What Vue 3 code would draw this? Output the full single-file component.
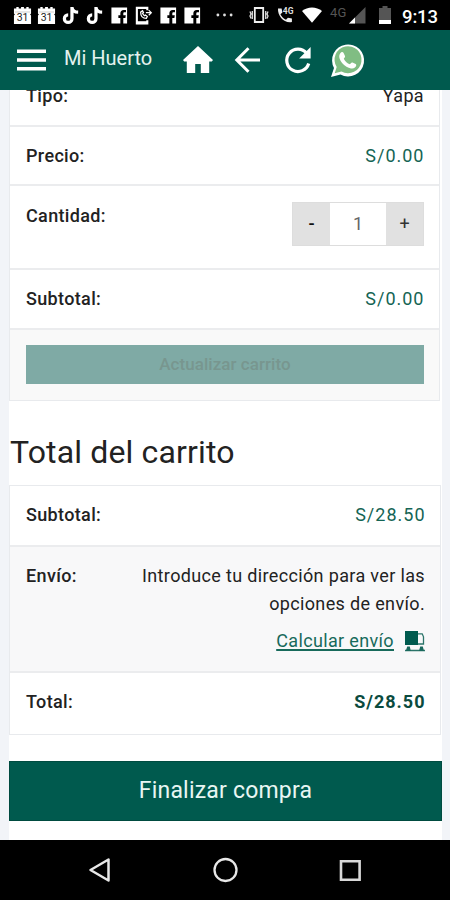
<script setup>
import { ref } from 'vue'

const quantity = ref(1)
const change = (step) => {
  quantity.value = Math.max(0, quantity.value + step)
}
</script>

<template>
  <div class="screen">
    <header class="status">
      <div class="notifications">
        <svg v-for="n in 2" :key="'cal' + n" viewBox="0 0 20 20">
          <path d="M1 2.500h2.500V1H6v1.500h2.500V1h3v1.500H14V1h2.500v1.500H19V8l-1 1 1 1v9H1v-9l1-1-1-1z" fill="#fff" />
          <path d="M2 6.300h16" stroke="#aaa" stroke-width=".6" />
          <text x="10" y="15.500" text-anchor="middle" class="day">31</text>
        </svg>
        <svg v-for="n in 2" :key="'note' + n" viewBox="0 0 20 20">
          <path d="M10.500 1v12.300a4 4 0 1 1-4-4M10.500 1.500c.5 3.200 2.800 4.900 6.500 5" fill="none" stroke="#fff" stroke-width="3.400" />
        </svg>
        <svg viewBox="0 0 20 20"><path d="M1.500 1.500h16.500v17H14v-6h2.200l.4-2.700H14V8.200c0-1 .4-1.500 1.600-1.500h1.200V4.300h-2.300c-2.400 0-3.600 1.400-3.600 3.500v2H8.800v2.700h2.100v6H1.500z" fill="#fff" /></svg>
        <svg viewBox="0 0 20 20">
          <path d="M14 4.500V2H3v16.500h11V15" fill="none" stroke="#fff" stroke-width="2.200" />
          <path d="M3 16h11v3H3z" fill="#fff" />
          <path d="M7 6.500c0 4 2.500 6.500 6 6.500l1-2-2-1.500-1 .7C9.800 9.500 9.300 8.500 9 7.700L10 7 9 5zM12.500 7h5.500M15.500 4.300 18.200 7l-2.700 2.700" fill="none" stroke="#fff" stroke-width="1.300" />
        </svg>
        <svg v-for="n in 2" :key="'fb' + n" viewBox="0 0 20 20"><path d="M1.500 1.500h16.500v17H14v-6h2.200l.4-2.700H14V8.200c0-1 .4-1.500 1.600-1.500h1.200V4.300h-2.300c-2.400 0-3.600 1.400-3.600 3.500v2H8.800v2.700h2.100v6H1.500z" fill="#fff" /></svg>
      </div>
      <svg class="dots" viewBox="0 0 18 4"><circle cx="2" cy="2" r="1.500" /><circle cx="9" cy="2" r="1.500" /><circle cx="16" cy="2" r="1.500" /></svg>
      <svg class="vibrate" viewBox="0 0 20 18">
        <path d="M5.800 2h8.400v14H5.800z" fill="none" stroke="#eee" stroke-width="1.800" />
        <path d="M3.300 5v8M16.700 5v8M1 5.500 2 8 1 10l1 2.500M19 5.500 18 8l1 2-1 2.500" fill="none" stroke="#ddd" stroke-width="1.300" />
      </svg>
      <svg class="call" viewBox="0 0 18 18">
        <path d="M1 2.500h3.600l.8 4-2 1.800c1.300 2.500 3 4.200 5.600 5.400l1.900-2 4 .9V16C7 17.500.5 10 1 2.500z" fill="#eee" />
        <text x="5.800" y="7.800" class="tiny">4G</text>
      </svg>
      <svg class="wifi" viewBox="0 0 20 16"><path d="M0 4C5.500-.7 14.500-.7 20 4L10 15.700z" fill="#fff" /></svg>
      <span class="network">4G</span>
      <svg class="signal" viewBox="0 0 17 17"><path d="M16.500 0v16.500H0z" fill="#555" /><path d="M6 10.500v6H0z" fill="#fff" /></svg>
      <svg class="battery" viewBox="0 0 12 18"><path d="M0 2h3.500V0h5v2H12v12H0z" fill="#555" /><path d="M0 14h12v4H0z" fill="#fff" /></svg>
      <span class="clock">9:13</span>
    </header>

    <nav class="appbar">
      <svg class="menu" viewBox="0 0 30 22"><path d="M0 2h30M0 11h30M0 20h30" stroke="#fff" stroke-width="3.500" /></svg>
      <span class="brand">Mi Huerto</span>
      <svg class="home" viewBox="0 0 30 28"><path d="M15 0 30 14l-1.200 1.500h-2.600V27h-8.400v-9h-5.600v9H3.800V15.500H1.200L0 14z" fill="#fff" /></svg>
      <svg class="back" viewBox="0 0 26 26"><path d="M25 13H2M13.500 1.300 1.800 13l11.700 11.700" fill="none" stroke="#fff" stroke-width="3" /></svg>
      <svg class="reload" viewBox="0 0 28 28"><path d="M22.700 7.300A11.200 11.200 0 1 0 24.700 17.500" fill="none" stroke="#fff" stroke-width="3.200" /><path d="M26.600 1v11.500H15.100z" fill="#fff" /></svg>
      <svg class="whatsapp" viewBox="0 0 36 36">
        <path d="M1 35 4 26A16 16 0 1 1 10.500 32.500z" fill="#fff" />
        <path d="M4.700 31.300 6.700 25A13.500 13.500 0 1 1 11.500 29.500z" fill="#80bd83" />
        <path d="M10.300 11.200c1-1.600 2.700-1.500 3.300-.3l1.400 3.200c.4 1-.7 1.900-1.200 2.600 1.500 2.900 3.400 4.500 6.100 5.500 1-1 1.600-2.200 2.600-1.700l3.200 1.600c1.200.8.300 2.600-.8 3.500-2 1.600-4.900 1-8.400-.9-3.400-2-6-5.300-7-8.500-.6-2-.1-3.700.8-5z" fill="#fff" />
      </svg>
    </nav>

    <main class="viewport">
      <div class="page">
        <section class="card item">
          <div class="row"><b>Tipo:</b><span>Yapa</span></div>
          <div class="row price"><b>Precio:</b><span class="money">S/0.00</span></div>
          <div class="row amount">
            <b>Cantidad:</b>
            <div class="stepper">
              <button class="minus" @click="change(-1)">-</button>
              <span class="count">{{ quantity }}</span>
              <button @click="change(1)">+</button>
            </div>
          </div>
          <div class="row"><b>Subtotal:</b><span class="money">S/0.00</span></div>
          <div class="update"><button disabled>Actualizar carrito</button></div>
        </section>

        <h2>Total del carrito</h2>

        <section class="card totals">
          <div class="row"><b>Subtotal:</b><span class="money">S/28.50</span></div>
          <div class="row shipping">
            <b>Envío:</b>
            <div class="details">
              <p>Introduce tu dirección para ver las opciones de envío.</p>
              <a><span>Calcular envío</span>
                <svg viewBox="0 0 20 21"><path d="M0 0h13v14H0z" fill="#005a4e" /><path d="M13 2.800h4.200l1.300 3V13H13" fill="none" stroke="#2b7469" stroke-width="1.300" /><path d="M0 19.500h20M3.500 16.500v3M16.500 16.500v3" fill="none" stroke="#2b7469" stroke-width="1.500" /><path d="M2.200 15.500h2.600l1 4.500h-5zM15.200 15.500h2.600l1.200 4.500h-5z" fill="#1a695d" /></svg>
              </a>
            </div>
          </div>
          <div class="row"><b>Total:</b><b class="money">S/28.50</b></div>
        </section>

        <button class="checkout">Finalizar compra</button>
      </div>
    </main>

    <footer class="navbar">
      <svg viewBox="0 0 24 26"><path d="M20.500 2.500v21L2.500 13z" fill="none" stroke="#e8e8e8" stroke-width="2.500" stroke-linejoin="round" /></svg>
      <svg viewBox="0 0 24 26"><circle cx="12.500" cy="13" r="11" fill="none" stroke="#e8e8e8" stroke-width="2.300" /></svg>
      <svg viewBox="0 0 24 26"><path d="M3 4.200h18.600v18.600H3z" fill="none" stroke="#d8d8d8" stroke-width="2.600" /></svg>
    </footer>
  </div>
</template>

<style>
body { margin: 0; }
</style>

<style scoped>
* { box-sizing: border-box; }
.screen { width: 450px; height: 900px; display: flex; flex-direction: column; overflow: hidden; background: #f2f4f8; font-family: Roboto, "Liberation Sans", sans-serif; font-size: 18px; line-height: 28px; color: #222; }
svg { display: block; flex: none; overflow: visible; }
button { font: inherit; border: 0; padding: 0; border-radius: 0; }

.status { height: 30px; flex: none; background: #000; color: #fff; display: flex; align-items: center; padding-left: 13px; }
.notifications { display: flex; gap: 5.300px; }
.notifications svg { width: 19px; height: 19px; }
.day { font-size: 11px; font-weight: 400; fill: #222; }
.tiny { font-size: 8.500px; font-weight: 700; fill: #ddd; }
.dots { width: 17px; height: 4px; fill: #ddd; margin-left: 14px; }
.vibrate { width: 20px; height: 18px; margin-left: 16px; }
.call { width: 18px; height: 18px; margin-left: 8px; }
.wifi { width: 20px; height: 16px; margin-left: 7px; }
.network { font-size: 13px; width: 18px; margin: -4px 0 0 8px; color: #555; }
.signal { width: 17px; height: 17px; margin-left: 1px; }
.battery { width: 12px; height: 18px; margin-left: 13px; }
.clock { margin: 3px 0 0 11px; font-size: 18.500px; font-weight: 500; letter-spacing: -.2px; }

.appbar { height: 60px; flex: none; background: #005a4e; display: flex; align-items: center; padding-left: 17px; }
.menu { width: 29px; height: 22px; }
.brand { margin: -4px 0 0 18px; width: 89px; font-size: 20px; color: #e4f2ef; white-space: nowrap; }
.home { width: 30px; height: 28px; margin-left: 30px; }
.back { width: 26px; height: 26px; margin-left: 22px; }
.reload { width: 28px; height: 28px; margin-left: 23px; }
.whatsapp { width: 36px; height: 36px; margin-left: 18px; }

.viewport { flex: 1; min-height: 0; overflow: hidden; padding: 0 8px 0 9px; }
.page { height: 774px; margin-top: -24px; background: #fff; display: flex; flex-direction: column; }
.card { border: 1.500px solid #e8eaed; letter-spacing: .35px; }
.item { height: 335px; margin-right: 2px; flex: none; }
.totals { height: 250px; margin-right: 1px; flex: none; }
.row { height: 60px; display: flex; justify-content: space-between; padding: 15px 15px 0 16px; border-bottom: 2px solid #ebecee; }
.row b { font-weight: 500; }
.money { color: #146454; letter-spacing: 1px; margin-right: -.5px; }
.price { height: 59px; }
.amount { height: 84px; padding-top: 16px; }
.stepper { display: flex; width: 132px; height: 44px; border: 1px solid #ddd; letter-spacing: 0; }
.stepper button { width: 37px; background: #e1e1e1; color: #333; }
.stepper .minus { color: #111; font-weight: 500; }
.count { flex: 1; text-align: center; line-height: 42px; color: #666; }
.update { height: 70px; padding: 15px 15px 15px 16px; background: #f9f9f9; }
.update button { display: block; width: 100%; height: 39px; background: #7faaa5; color: #78968f; font-weight: 500; font-size: 17px; line-height: 39px; letter-spacing: .05px; }
h2 { flex: none; margin: 31px 0 13px 1px; font-size: 32px; line-height: 40px; font-weight: 400; color: #222; height: 40px; letter-spacing: .15px; }
.totals .row { height: 61px; }
.totals .shipping { height: 126px; background: #f8f8f9; }
.totals .row:last-child { border: 0; }
.details { width: 310px; text-align: right; }
.details p { margin: 0; padding-left: 20px; }
.details a { display: flex; justify-content: flex-end; align-items: center; gap: 11px; margin-top: 9px; color: #176a5b; }
.details a span { text-decoration: underline; text-decoration-thickness: 2px; text-underline-offset: 2px; }
.details a svg { width: 20px; height: 21px; }
.totals b.money { color: #0b4b3e; font-weight: 700; }
.checkout { height: 60px; flex: none; margin-top: 26px; background: #005a4e; border: 1px solid #004b40; color: #e8f6f3; font-size: 23px; letter-spacing: .2px; line-height: 56px; }

.navbar { height: 60px; flex: none; background: #000; display: flex; align-items: center; padding-left: 88px; gap: 101px; }
.navbar svg { width: 24px; height: 26px; }
</style>
